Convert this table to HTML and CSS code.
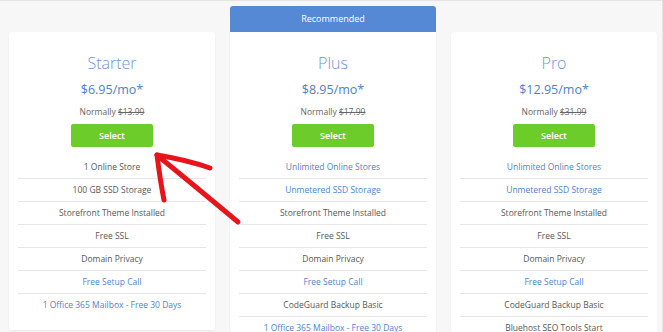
FILE: index.html
```html
<!DOCTYPE html>
<html lang="en">
<head>
<meta charset="utf-8">
<title>Pricing</title>
<link rel="stylesheet" href="styles.css">
</head>
<body>
<div class="page">
  <div class="plans">
    <div class="plan plan-side">
      <div class="card">
        <h2 class="title">Starter</h2>
        <div class="price">$6.95/mo*</div>
        <div class="normal">Normally <s>$13.99</s></div>
        <a class="btn">Select</a>
        <ul class="features">
          <li>1 Online Store</li>
          <li>100 GB SSD Storage</li>
          <li>Storefront Theme Installed</li>
          <li>Free SSL</li>
          <li>Domain Privacy</li>
          <li class="link">Free Setup Call</li>
          <li class="link">1 Office 365 Mailbox - Free 30 Days</li>
        </ul>
      </div>
    </div>
    <div class="plan plan-rec">
      <div class="rec">Recommended</div>
      <div class="card card-rec">
        <h2 class="title">Plus</h2>
        <div class="price">$8.95/mo*</div>
        <div class="normal">Normally <s>$17.99</s></div>
        <a class="btn">Select</a>
        <ul class="features">
          <li class="link">Unlimited Online Stores</li>
          <li class="link">Unmetered SSD Storage</li>
          <li>Storefront Theme Installed</li>
          <li>Free SSL</li>
          <li>Domain Privacy</li>
          <li class="link">Free Setup Call</li>
          <li>CodeGuard Backup Basic</li>
          <li class="link">1 Office 365 Mailbox - Free 30 Days</li>
        </ul>
      </div>
    </div>
    <div class="plan plan-side">
      <div class="card">
        <h2 class="title">Pro</h2>
        <div class="price">$12.95/mo*</div>
        <div class="normal">Normally <s>$31.99</s></div>
        <a class="btn">Select</a>
        <ul class="features">
          <li class="link">Unlimited Online Stores</li>
          <li class="link">Unmetered SSD Storage</li>
          <li>Storefront Theme Installed</li>
          <li>Free SSL</li>
          <li>Domain Privacy</li>
          <li class="link">Free Setup Call</li>
          <li>CodeGuard Backup Basic</li>
          <li>Bluehost SEO Tools Start</li>
        </ul>
      </div>
    </div>
  </div>
  <svg class="arrow" width="663" height="332" viewBox="0 0 663 332">
    <path d="M238 221 C 214 201, 190 181, 158 155" />
    <path d="M157 154 C 159 170, 161 184, 164 199" />
    <path d="M157 154 C 175 157, 193 161, 210 167" />
  </svg>
</div>
</body>
</html>
```
FILE: styles.css
```css
* { box-sizing: border-box; }
html, body { margin: 0; padding: 0; }
body {
  font-family: "Open Sans", "DejaVu Sans", sans-serif;
  background: #f7f7f7;
}
.page {
  position: relative;
  width: 663px;
  height: 332px;
  overflow: hidden;
  background: #f7f7f7;
  border-top: 1px solid #e4e4e4;
  border-right: 1px solid #e4e4e4;
}
.plans {
  display: flex;
  align-items: flex-start;
  gap: 15px;
  padding: 5px 0 0 9px;
}
.plan {
  width: 206px;
  flex: none;
  display: flex;
  flex-direction: column;
}
.plan-side { margin-top: 26px; }
.rec {
  height: 26px;
  line-height: 25px;
  background: #5589d5;
  color: #fff;
  font-size: 9px;
  text-align: center;
  border-radius: 3px 3px 0 0;
}
.card {
  background: #fff;
  border-radius: 3px;
  box-shadow: 0 1px 2px rgba(0,0,0,0.06);
  padding: 21px 9px 14px;
  text-align: center;
}
.card-rec { border-radius: 0 0 3px 3px; }
.title {
  margin: 0;
  font-size: 16px;
  line-height: 20px;
  font-weight: 300;
  color: #6d95db;
}
.price {
  margin-top: 8px;
  font-size: 12.5px;
  line-height: 18px;
  color: #4d7fd2;
}
.normal {
  margin-top: 7px;
  font-size: 8.5px;
  line-height: 12px;
  color: #666;
}
.normal s { color: #666; }
.btn {
  display: block;
  width: 82px;
  height: 23px;
  margin: 6px auto 0;
  line-height: 23px;
  background: #6ccd2a;
  color: #fff;
  font-size: 9px;
  font-weight: 600;
  border-radius: 2px;
}
.features {
  list-style: none;
  margin: 9px 0 0;
  padding: 0;
}
.features li {
  height: 23px;
  line-height: 22px;
  font-size: 8.5px;
  color: #585858;
  border-bottom: 1px solid #e6e6e6;
  white-space: nowrap;
}
.features li:last-child { border-bottom: none; height: 22px; }
.features li.link { color: #4f84d4; }
.arrow {
  position: absolute;
  left: 0;
  top: 0;
  pointer-events: none;
}
.arrow path {
  fill: none;
  stroke: #e8141c;
  stroke-width: 5;
  stroke-linecap: round;
  stroke-linejoin: round;
}
```
